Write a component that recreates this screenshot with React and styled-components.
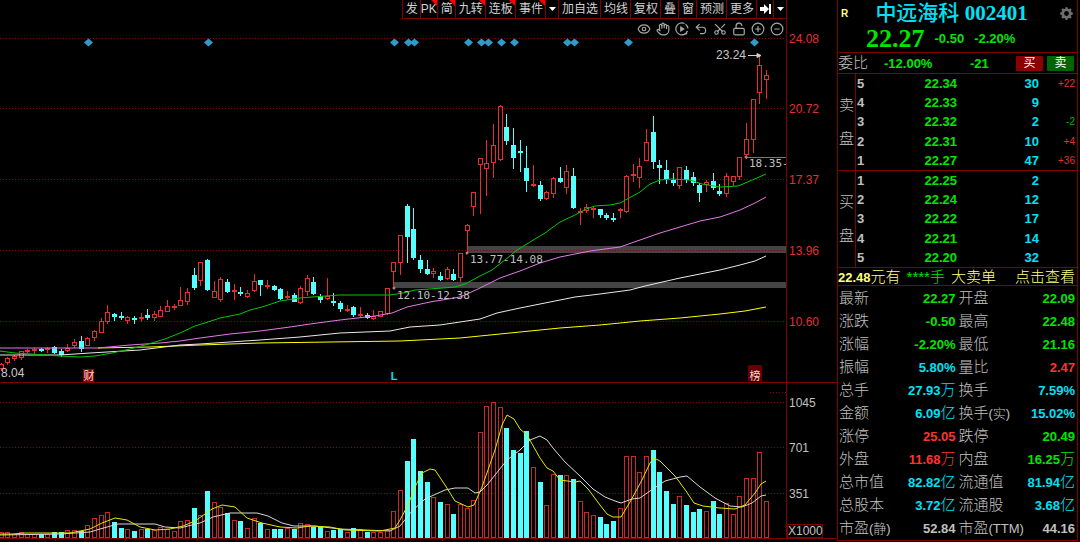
import styled, { createGlobalStyle } from "styled-components";
import { Eye, Hand, Undo2, Scissors, LockOpen, CirclePlus, CircleMinus } from "lucide-react";
import { BsGearFill } from "react-icons/bs";

const GlobalStyle = createGlobalStyle`
    * {
        box-sizing: border-box;
    }
    body {
        margin: 0;
        background-color: #000;
        color: #c0c0c0;
        font-family: "Liberation Sans", "Noto Sans CJK SC", sans-serif;
    }
    button {
        font-family: inherit;
        cursor: pointer;
    }
`;

const colors = {
    line: "#800000",
    red: "#ff3232",
    green: "#00e600",
    cyan: "#00e1f5",
    gray: "#c0c0c0",
    yellow: "#ffff80",
};

const Page = styled.div`
    display: grid;
    grid-template-columns: minmax(0, 1fr) 241px;
    padding-right: 2px;
    min-height: 100vh;
    align-items: start;
`;

const ChartArea = styled.main`
    display: flex;
    flex-direction: column;
    overflow: hidden;
`;

const Header = styled.header`
    display: flex;
    flex-direction: column;
    align-items: flex-end;
    height: 38px;
    margin-right: 50px;
    border-right: 1px solid ${colors.line};
`;

const Toolbar = styled.nav`
    display: flex;
    height: 19px;
    border-bottom: 1px solid ${colors.line};
`;

const ToolButton = styled.button`
    position: relative;
    display: flex;
    align-items: center;
    justify-content: center;
    height: 18px;
    padding: ${({ $tight }) => ($tight ? "0" : "0 2px 0 3px")};
    border: 0;
    border-left: 1px solid ${colors.line};
    background-color: #000;
    color: #d0d0d0;
    font-size: 12px;
    line-height: 18px;
    white-space: nowrap;

    ${({ $isNew }) => $isNew && `
        &::after {
            content: "";
            position: absolute;
            top: 0;
            right: 0;
            border-top: 6px solid #ff0000;
            border-left: 6px solid transparent;
        }
    `}
`;

const IconRow = styled.div`
    display: flex;
    height: 19px;
`;

const IconButton = styled.button`
    display: flex;
    align-items: center;
    justify-content: center;
    width: 19px;
    padding: 0;
    border: 0;
    background: none;
    color: #a8a8a8;
`;

const ScissorsUp = styled(Scissors)`
    transform: rotate(-90deg);
`;

const Chart = styled.svg`
    display: block;
    width: 100%;
    height: ${({ $height }) => $height}px;
    overflow: visible;
`;

const Panel = styled.aside`
    border: 1px solid ${colors.line};
    border-top: 0;
`;

const TitleRow = styled.div`
    display: grid;
    grid-template-columns: 20px 1fr 32px;
    align-items: center;
    height: 26px;
`;

const Mark = styled.span`
    padding-left: 3px;
    color: ${colors.yellow};
    font-size: 10px;
    font-weight: bold;
`;

const Title = styled.h1`
    margin: 0;
    color: ${colors.cyan};
    font-family: "Liberation Serif", "Noto Sans CJK SC", serif;
    font-size: 21px;
    font-weight: bold;
    line-height: 26px;
    text-align: center;
    white-space: nowrap;
`;

const TitleName = styled.span`
    font-weight: 500;
`;

const GearButton = styled(IconButton)`
    width: 32px;
    padding-left: 10px;
    color: #6e6e6e;
`;

const PriceRow = styled.div`
    display: flex;
    align-items: center;
    gap: 10px;
    height: 26px;
    padding-left: 28px;
    color: ${colors.green};
    font-size: 13px;
    font-weight: bold;
    line-height: 30px;
`;

const Price = styled.strong`
    font-family: "Liberation Serif", serif;
    font-size: 26px;
    line-height: 26px;
`;

const RatioRow = styled.div`
    display: grid;
    grid-template-columns: 46px 86px 1fr auto;
    align-items: center;
    height: 22px;
    border-top: 1px solid ${colors.line};
    border-bottom: 1px solid ${colors.line};
    padding-right: 3px;
    color: ${colors.green};
    font-size: 13px;
    font-weight: bold;
`;

const RatioLabel = styled.span`
    color: ${colors.gray};
    font-size: 15px;
    font-weight: 300;
    line-height: 18px;
`;

const TradeButtons = styled.div`
    display: flex;
    gap: 4px;
`;

const TradeButton = styled.button`
    width: 27px;
    height: 15px;
    padding: 0;
    border: 0;
    border-radius: 1px;
    background-color: ${({ $sell }) => ($sell ? "#006400" : "#8b0000")};
    color: #fff;
    font-size: 12px;
    line-height: 15px;
`;

const Book = styled.section`
    display: grid;
    grid-template-columns: 18px 1fr;
    height: 97px;
    border-bottom: 1px solid ${colors.line};
`;

const BookSide = styled.div`
    display: flex;
    flex-direction: column;
    align-items: center;
    justify-content: center;
    gap: 16px;
    border-right: 1px solid ${colors.line};
    font-size: 15px;
    font-weight: 300;
    line-height: 18px;
`;

const BookTable = styled.table`
    width: 100%;
    border-collapse: collapse;
    table-layout: fixed;
    font-size: 13px;
    font-weight: bold;

    th,
    td {
        height: 19px;
        padding: 0;
        line-height: 19px;
        text-align: right;
    }
    th {
        width: 13px;
        padding-left: 1px;
        text-align: left;
    }
`;

const BookPrice = styled.td`
    width: 88px;
    color: ${colors.green};
`;

const BookVolume = styled.td`
    width: 82px;
    color: ${colors.cyan};
`;

const BookChange = styled.td`
    color: ${({ $down }) => ($down ? "#00b400" : "#e03030")};
    font-size: 10px;
    font-weight: normal;

    span {
        padding-right: 2px;
    }
`;

const Notice = styled.a`
    display: flex;
    gap: 6px;
    height: 18px;
    border-bottom: 1px solid ${colors.line};
    padding-right: 2px;
    color: ${colors.yellow};
    font-size: 15px;
    font-weight: 300;
    line-height: 17px;
    text-decoration: none;
    white-space: nowrap;

    b {
        font-size: 13px;
        font-weight: 700;
    }
`;

const NoticeHands = styled.span`
    color: ${colors.green};
`;

const NoticeAction = styled.span`
    margin-left: auto;
`;

const StatsTable = styled.table`
    width: 100%;
    border-collapse: collapse;
    table-layout: fixed;
    margin-top: 1px;

    th,
    td {
        height: 23px;
        padding: 0 2px 0 1px;
        line-height: 22px;
        white-space: nowrap;
    }
    th {
        width: 65px;
        color: ${colors.gray};
        font-size: 15px;
        font-weight: 300;
        text-align: left;
    }
    small {
        font-size: 13px;
    }
`;

const StatValue = styled.td`
    color: ${({ $color }) => colors[$color]};
    font-size: 13px;
    font-weight: bold;
    text-align: right;
`;

const Unit = styled.span`
    font-size: 15px;
    font-weight: 300;
`;

const tools = [
    { label: "发" },
    { label: "PK", isNew: true, tight: true },
    { label: "简", isNew: true },
    { label: "九转", isNew: true },
    { label: "连板", isNew: true },
    { label: "事件", isNew: true },
    { label: "更多事件", icon: "down" },
    { label: "加自选" },
    { label: "均线" },
    { label: "复权" },
    { label: "叠" },
    { label: "窗" },
    { label: "预测" },
    { label: "更多" },
    { label: "隐藏侧栏", icon: "skip" },
    { label: "菜单", icon: "down" },
];

// type, high, body top, body bottom, low, volume top
const candles = [
    ["r", 363, 364, 368, 370, 532], ["r", 357, 358, 362, 364, 532], ["r", 355, 356, 358, 360, 534],
    ["r", 351, 351, 357, 359, 532], ["r", 349, 350, 351, 352, 534], ["r", 348, 349, 350, 353, 534],
    ["c", 348, 349, 350, 351, 534], ["r", 347, 348, 349, 352, 534], ["c", 346, 347, 352, 353, 532],
    ["c", 349, 351, 354, 356, 532], ["r", 344, 348, 350, 351, 530], ["r", 339, 342, 345, 347, 530],
    ["c", 336, 341, 348, 351, 531], ["r", 337, 338, 345, 345, 525], ["r", 330, 331, 337, 340, 518],
    ["r", 318, 321, 332, 332, 515], ["r", 305, 312, 321, 323, 512], ["c", 313, 314, 316, 320, 522],
    ["c", 312, 316, 317, 319, 528], ["r", 316, 317, 320, 323, 529], ["c", 316, 318, 319, 323, 531],
    ["r", 313, 317, 318, 321, 529], ["c", 309, 315, 317, 319, 529], ["r", 311, 314, 317, 320, 530],
    ["r", 306, 310, 316, 316, 527], ["r", 300, 306, 311, 311, 529], ["r", 304, 306, 307, 309, 531],
    ["r", 287, 300, 305, 305, 521], ["r", 288, 292, 301, 304, 520], ["c", 268, 275, 287, 289, 508],
    ["r", 262, 262, 280, 285, 515], ["c", 259, 260, 289, 290, 491], ["r", 281, 291, 297, 297, 502],
    ["r", 277, 279, 299, 301, 507], ["c", 279, 282, 291, 292, 513], ["r", 284, 290, 291, 299, 520],
    ["c", 287, 292, 293, 295, 521], ["r", 290, 293, 296, 297, 528], ["r", 274, 281, 290, 291, 518],
    ["c", 280, 280, 284, 295, 523], ["r", 280, 285, 286, 288, 529], ["c", 285, 286, 289, 290, 529],
    ["c", 288, 289, 298, 299, 529], ["r", 291, 296, 297, 298, 528], ["c", 293, 295, 301, 301, 529],
    ["r", 286, 288, 302, 303, 523], ["r", 275, 278, 291, 295, 524], ["c", 277, 282, 293, 294, 527],
    ["c", 294, 296, 299, 302, 527], ["r", 278, 296, 298, 299, 531], ["c", 293, 301, 302, 305, 530],
    ["c", 301, 303, 308, 311, 529], ["r", 305, 309, 310, 311, 532], ["c", 306, 307, 314, 316, 528],
    ["r", 307, 314, 315, 316, 529], ["c", 313, 315, 317, 318, 532], ["r", 310, 316, 318, 319, 532],
    ["r", 311, 311, 316, 316, 532], ["r", 288, 288, 313, 314, 530], ["r", 262, 262, 271, 288, 511],
    ["r", 235, 235, 262, 274, 490], ["c", 204, 206, 236, 262, 461], ["c", 208, 229, 257, 259, 439],
    ["c", 255, 260, 268, 272, 471], ["c", 260, 269, 273, 274, 482], ["r", 268, 271, 273, 277, 497],
    ["c", 272, 276, 279, 280, 502], ["r", 267, 269, 278, 279, 504], ["c", 269, 274, 279, 280, 514],
    ["r", 253, 253, 277, 281, 504], ["r", 224, 225, 230, 253, 508], ["r", 192, 192, 206, 215, 500],
    ["r", 158, 158, 164, 213, 432], ["r", 140, 163, 168, 195, 406], ["r", 124, 145, 162, 177, 402],
    ["r", 105, 106, 159, 160, 407], ["c", 114, 127, 140, 144, 428], ["c", 128, 145, 157, 168, 450],
    ["c", 140, 151, 152, 171, 453], ["c", 146, 168, 180, 191, 431], ["r", 165, 184, 185, 186, 467],
    ["c", 181, 185, 198, 200, 482], ["r", 191, 192, 198, 199, 505], ["r", 177, 178, 193, 197, 474],
    ["c", 167, 178, 181, 182, 475], ["r", 165, 171, 187, 193, 475], ["c", 168, 176, 207, 208, 479],
    ["r", 208, 211, 212, 224, 501], ["r", 204, 207, 210, 212, 512], ["r", 207, 208, 209, 217, 515],
    ["c", 209, 209, 214, 217, 517], ["c", 213, 215, 217, 219, 524], ["c", 213, 218, 219, 221, 521],
    ["r", 208, 209, 210, 217, 508], ["r", 175, 176, 211, 212, 456], ["r", 164, 174, 175, 181, 456],
    ["r", 158, 166, 177, 187, 472], ["r", 129, 142, 160, 160, 456], ["c", 116, 132, 161, 168, 450],
    ["c", 160, 165, 167, 183, 472], ["c", 160, 170, 178, 183, 491], ["c", 173, 180, 182, 185, 504],
    ["r", 167, 167, 185, 188, 496], ["c", 166, 170, 179, 182, 505], ["c", 172, 177, 182, 185, 512],
    ["c", 183, 185, 192, 201, 509], ["r", 180, 182, 184, 191, 511], ["c", 173, 181, 187, 189, 501],
    ["c", 184, 191, 193, 195, 514], ["r", 173, 176, 193, 196, 503], ["r", 176, 176, 181, 185, 514],
    ["r", 157, 157, 176, 179, 496], ["r", 123, 139, 154, 158, 478], ["r", 99, 99, 139, 152, 478],
    ["r", 56, 65, 92, 103, 452], ["r", 70, 75, 79, 98, 501],
];

const averages = [
    { color: "#ffff00", points: "98,348 150,347 200,345 260,343 330,342 400,341 460,338 490,335 530,331 560,328 600,325 640,321 680,318 720,314 745,311 766,307" },
    { color: "#e8e8e8", points: "0,355 60,355 90,353 140,350 180,345 200,344 260,340 300,337 340,333 390,331 410,327 440,325 460,322 480,319 497,313 520,308 550,302 575,297 600,294 630,290 645,286 680,278 720,270 740,265 755,261 766,256" },
    { color: "#e878e8", points: "0,348 98,348 130,345 160,343 180,341 200,338 230,334 260,331 290,327 310,324 340,320 375,316 392,313 407,307 430,302 460,297 478,289 500,278 520,271 540,263 560,257 590,251 620,247 640,240 660,233 700,221 720,217 740,210 755,203 766,197" },
    { color: "#00c800", points: "0,351 15,353 30,354 60,356 80,357 95,356 112,353 130,349 145,345 165,339 180,333 195,326 208,322 220,318 240,314 250,310 262,307 280,301 300,298 312,297 340,295 390,295 403,293 415,290 430,289 455,287 465,284 480,276 492,270 505,260 517,250 535,239 545,233 560,222 575,215 586,209 595,206 610,205 620,203 640,192 650,184 660,180 672,179 690,180 702,184 720,187 738,186 750,181 766,174" },
];

const volumeAverages = [
    { color: "#d8d8d8", points: "0,535 60,534 90,532 100,529 118,524 155,524 165,527 180,528 200,523 213,517 230,513 257,513 268,516 282,523 294,526 315,526 340,529 390,531 400,526 412,511 425,499 445,490 455,488 468,488 475,493 480,492 487,485 507,460 520,450 530,440 540,436 547,440 553,448 565,462 580,476 593,489 605,497 615,501 621,503 632,499 640,498 650,491 665,481 680,477 687,476 700,487 715,498 730,506 742,507 752,503 761,496 766,495" },
    { color: "#e6e600", points: "0,534 12,534 25,533 70,533 80,531 90,529 102,523 115,518 127,520 140,527 155,530 170,529 183,526 195,521 205,514 212,509 222,505 235,507 247,518 262,523 280,527 297,528 310,526 330,527 345,530 380,531 395,528 400,520 408,505 415,487 422,473 430,469 435,470 445,485 455,501 468,507 474,505 482,487 495,450 502,425 507,415 514,419 520,429 527,435 540,458 547,468 553,471 560,480 575,482 580,481 588,489 600,505 607,514 613,517 621,517 630,502 642,480 650,463 654,458 660,461 675,476 686,491 694,503 703,506 720,508 735,509 745,505 755,493 761,484 766,481" },
];

const events = [88, 208, 394, 408, 414, 468, 481, 488, 501, 514, 567, 574, 628, 754];

const priceTicks = [[38, "24.08"], [108, "20.72"], [179, "17.37"], [250, "13.96"], [321, "10.60"]];
const volumeTicks = [[402, "1045"], [447, "701"], [493, "351"]];

const sells = [
    ["5", "22.34", "30", "+22"],
    ["4", "22.33", "9", ""],
    ["3", "22.32", "2", "-2"],
    ["2", "22.31", "10", "+4"],
    ["1", "22.27", "47", "+36"],
];

const buys = [
    ["1", "22.25", "2", ""],
    ["2", "22.24", "12", ""],
    ["3", "22.22", "17", ""],
    ["4", "22.21", "14", ""],
    ["5", "22.20", "32", ""],
];

const stats = [
    [["最新", "", "22.27", "", "green"], ["开盘", "", "22.09", "", "green"]],
    [["涨跌", "", "-0.50", "", "green"], ["最高", "", "22.48", "", "green"]],
    [["涨幅", "", "-2.20%", "", "green"], ["最低", "", "21.16", "", "green"]],
    [["振幅", "", "5.80%", "", "cyan"], ["量比", "", "2.47", "", "red"]],
    [["总手", "", "27.93", "万", "cyan"], ["换手", "", "7.59%", "", "cyan"]],
    [["金额", "", "6.09", "亿", "cyan"], ["换手", "(实)", "15.02%", "", "cyan"]],
    [["涨停", "", "25.05", "", "red"], ["跌停", "", "20.49", "", "green"]],
    [["外盘", "", "11.68", "万", "red"], ["内盘", "", "16.25", "万", "green"]],
    [["总市值", "", "82.82", "亿", "cyan"], ["流通值", "", "81.94", "亿", "cyan"]],
    [["总股本", "", "3.72", "亿", "cyan"], ["流通股", "", "3.68", "亿", "cyan"]],
    [["市盈", "(静)", "52.84", "", "gray"], ["市盈", "(TTM)", "44.16", "", "gray"]],
];

const candleX = (index) => Math.floor(1.3 + index * 6.653);

function ToolIcon({ name }) {
    if (name === "skip") {
        return (
            <svg width="11" height="12" viewBox="0 0 11 12" fill="#fff" aria-hidden="true">
                <path d="M0 4h4V1l5 5-5 5V8H0zM9 1h2v10H9z" />
            </svg>
        );
    }
    return (
        <svg width="7" height="4" viewBox="0 0 7 4" fill="#fff" aria-hidden="true">
            <path d="M0 0h7L3.500 4z" />
        </svg>
    );
}

function ReplayIcon() {
    return (
        <svg width="14" height="14" viewBox="0 0 14 14" fill="none" stroke="currentColor" strokeWidth="1.200" aria-hidden="true">
            <path d="M9.500 1.500A6 6 0 1 0 12.500 9M10.500 2.200A6 6 0 0 1 13 6.500M9 12.500l2.500-.8.300-2.400" />
            <path d="M5.200 4v6l4.600-3z" fill="currentColor" stroke="none" />
        </svg>
    );
}

function Candle({ data, index }) {
    const [type, high, top, bottom, low] = data;
    const x = candleX(index);
    const height = bottom - top + 1;
    if (type === "c") {
        return (
            <g fill="#54ffff">
                <rect x={x} y={high} width="1" height={low - high + 1} />
                <rect x={x - 2} y={top} width="5" height={height} />
            </g>
        );
    }
    return (
        <g fill="#e62e2e">
            <rect x={x} y={high} width="1" height={top - high} />
            <rect x={x} y={bottom} width="1" height={low - bottom + 1} />
            {height > 2
                ? <rect x={x - 1.5} y={top + 0.5} width="4" height={height - 1} fill="none" stroke="#e62e2e" />
                : <rect x={x - 2} y={top} width="5" height={height} />}
        </g>
    );
}

function Averages({ lines }) {
    return lines.map((line) => (
        <polyline key={line.color} points={line.points} fill="none" stroke={line.color} strokeWidth="1" />
    ));
}

function Grid({ ticks, color }) {
    return ticks.map(([y, label]) => (
        <g key={label}>
            <line x1="0" x2="786" y1={y + 0.5} y2={y + 0.5} stroke="#8c0000" strokeDasharray="1 2" />
            <text x="789" y={y + 5} fill={color} fontSize="12">{label}</text>
        </g>
    ));
}

function PriceChart() {
    return (
        <Chart $height={345} viewBox="0 38 837 345" preserveAspectRatio="xMaxYMin meet" role="img" aria-label="K线">
            <rect x="467" y="246" width="319" height="7" fill="#444" />
            <rect x="394" y="282" width="392" height="6" fill="#444" />
            <line x1="746" x2="786" y1="157.5" y2="157.5" stroke="#777" />
            <Grid ticks={priceTicks} color="#e03030" />
            {candles.map((data, index) => <Candle key={index} data={data} index={index} />)}
            <Averages lines={averages} />
            <g fill="#2e9bc8">
                {events.map((x) => <path key={x} d={`M${x - 4} 42.500l4.500-4 4.500 4-4.500 4z`} />)}
            </g>
            <g fill="#b08080">
                <circle cx="394" cy="288" r="1.500" />
                <circle cx="467" cy="253" r="1.500" />
                <circle cx="746" cy="157" r="1.500" />
            </g>
            <g fill="#c0c0c0" fontFamily="DejaVu Sans Mono, monospace" fontSize="11">
                <text x="397" y="299">12.10-12.38</text>
                <text x="470" y="263">13.77-14.08</text>
                <text x="749" y="167">18.35-</text>
            </g>
            <g fill="#c8c8c8" fontSize="12">
                <text x="716" y="59">23.24</text>
                <text x="1" y="377">8.04</text>
            </g>
            <path d="M748 55.500h10M757 53.500l4 2-4 2z" stroke="#d0d0d0" fill="#d0d0d0" />
            <rect x="83" y="369" width="11" height="13" fill="#8c0000" />
            <rect x="748" y="365" width="14" height="16" fill="#640000" />
            <g fill="#f0d8d8" fontSize="11" textAnchor="middle">
                <text x="89" y="380">财</text>
                <text x="755" y="380">榜</text>
                <text x="394" y="380" fill="#00e1f5" fontWeight="bold">L</text>
            </g>
            <path d="M0 382.500h837M786.500 38v345" stroke={colors.line} />
        </Chart>
    );
}

function VolumeChart() {
    return (
        <Chart $height={159} viewBox="0 383 837 159" preserveAspectRatio="xMaxYMin meet" role="img" aria-label="成交量">
            <Grid ticks={volumeTicks} color="#c0c0c0" />
            <line x1="770" x2="786" y1="392.5" y2="392.5" stroke="#8c0000" strokeDasharray="1 2" />
            {candles.map(([type, , , , , top], index) => (
                type === "c"
                    ? <rect key={index} x={candleX(index) - 2} y={top} width="5" height={538 - top} fill="#54ffff" />
                    : <rect key={index} x={candleX(index) - 1.5} y={top + 0.5} width="4" height={537 - top} fill="none" stroke="#c82828" />
            ))}
            <Averages lines={volumeAverages} />
            <path d="M0 538.500h837M786.500 383v156M55.500 539v2M125.500 539v2M197.500 539v2M290.500 539v2M372.500 539v2M442.500 539v2M517.500 539v2" stroke={colors.line} />
            <rect x="787.500" y="524.500" width="35" height="13" fill="none" stroke={colors.line} />
            <text x="788" y="535" fill="#c0c0c0" fontSize="12">X1000</text>
        </Chart>
    );
}

function OrderBook({ side, rows }) {
    return (
        <Book>
            <BookSide>
                <span>{side}</span>
                <span>盘</span>
            </BookSide>
            <BookTable>
                <tbody>
                    {rows.map(([level, price, volume, change]) => (
                        <tr key={level}>
                            <th scope="row">{level}</th>
                            <BookPrice>{price}</BookPrice>
                            <BookVolume>{volume}</BookVolume>
                            <BookChange $down={change.startsWith("-")}><span>{change}</span></BookChange>
                        </tr>
                    ))}
                </tbody>
            </BookTable>
        </Book>
    );
}

export default function App() {
    return (
        <>
            <GlobalStyle />
            <Page>
                <ChartArea>
                    <Header>
                        <Toolbar>
                            {tools.map(({ label, isNew, tight, icon }) => (
                                <ToolButton key={label} $isNew={isNew} $tight={tight} aria-label={icon ? label : undefined}>
                                    {icon ? <ToolIcon name={icon} /> : label}
                                </ToolButton>
                            ))}
                        </Toolbar>
                        <IconRow>
                            <IconButton aria-label="显示"><Eye size={14} /></IconButton>
                            <IconButton aria-label="拖动"><Hand size={14} /></IconButton>
                            <IconButton aria-label="回放"><ReplayIcon /></IconButton>
                            <IconButton aria-label="撤销"><Undo2 size={14} /></IconButton>
                            <IconButton aria-label="剪切"><ScissorsUp size={14} /></IconButton>
                            <IconButton aria-label="锁定"><LockOpen size={14} /></IconButton>
                            <IconButton aria-label="放大"><CirclePlus size={14} /></IconButton>
                            <IconButton aria-label="缩小"><CircleMinus size={14} /></IconButton>
                        </IconRow>
                    </Header>
                    <PriceChart />
                    <VolumeChart />
                </ChartArea>
                <Panel>
                    <TitleRow>
                        <Mark>R</Mark>
                        <Title><TitleName>中远海科</TitleName> 002401</Title>
                        <GearButton aria-label="设置"><BsGearFill size={13} /></GearButton>
                    </TitleRow>
                    <PriceRow>
                        <Price>22.27</Price>
                        <span>-0.50</span>
                        <span>-2.20%</span>
                    </PriceRow>
                    <RatioRow>
                        <RatioLabel>委比</RatioLabel>
                        <span>-12.00%</span>
                        <span>-21</span>
                        <TradeButtons>
                            <TradeButton>买</TradeButton>
                            <TradeButton $sell>卖</TradeButton>
                        </TradeButtons>
                    </RatioRow>
                    <OrderBook side="卖" rows={sells} />
                    <OrderBook side="买" rows={buys} />
                    <Notice href="#orders">
                        <span><b>22.48</b>元有</span>
                        <NoticeHands>****手</NoticeHands>
                        <span>大卖单</span>
                        <NoticeAction>点击查看</NoticeAction>
                    </Notice>
                    <StatsTable>
                        <tbody>
                            {stats.map((row) => (
                                <tr key={row[0][0]}>
                                    {row.map(([label, note, value, unit, color]) => [
                                        <th key={label} scope="row">{label}<small>{note}</small></th>,
                                        <StatValue key={value} $color={color}>{value}<Unit>{unit}</Unit></StatValue>,
                                    ])}
                                </tr>
                            ))}
                        </tbody>
                    </StatsTable>
                </Panel>
            </Page>
        </>
    );
}
